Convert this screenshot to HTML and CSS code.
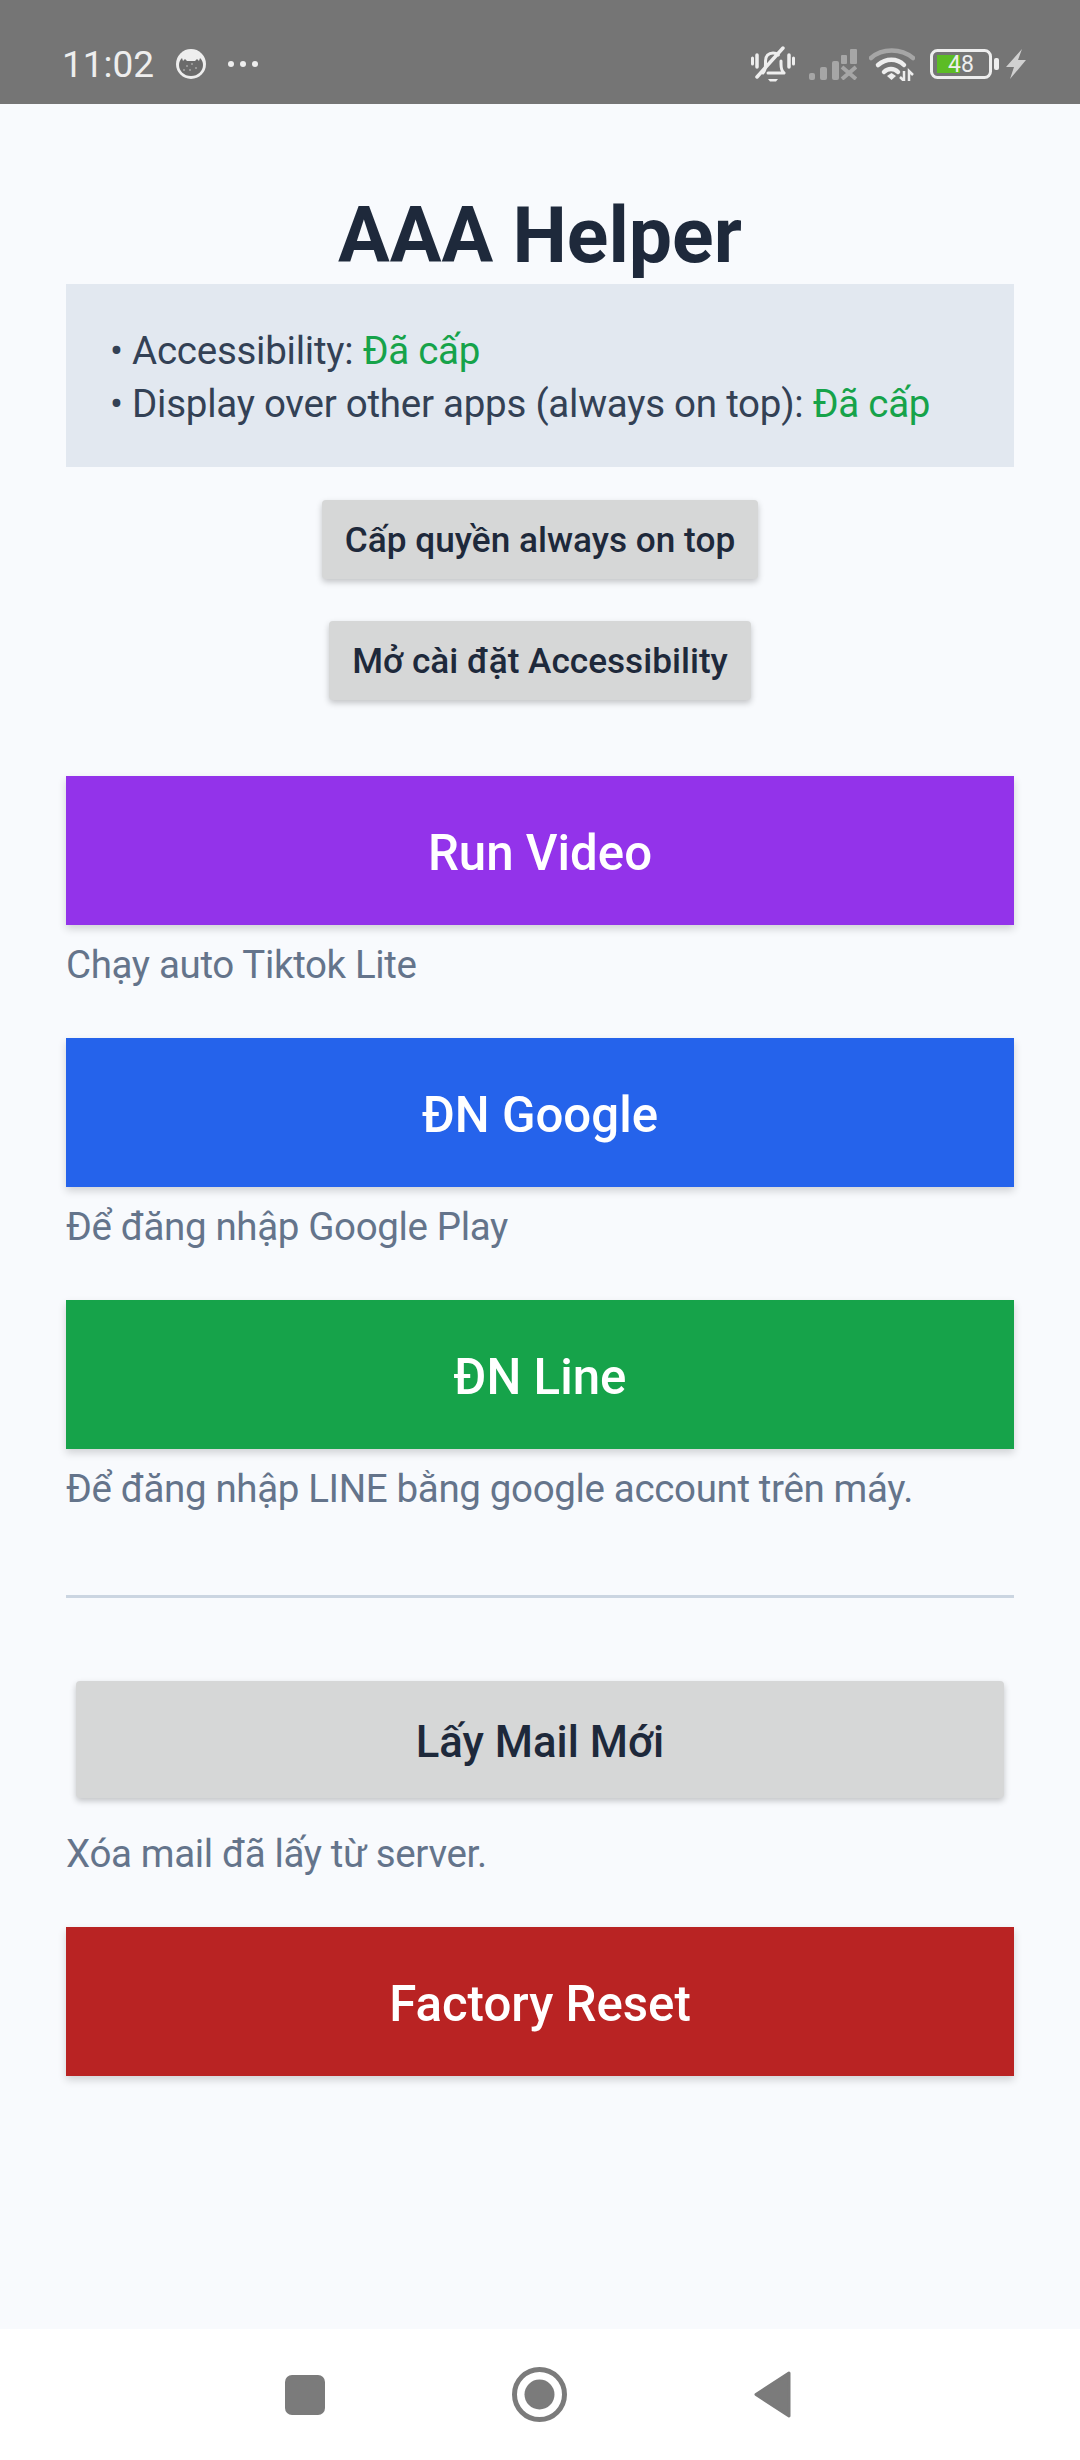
FILE: index.html
```html
<!DOCTYPE html>
<html lang="vi">
<head>
    <meta charset="UTF-8">
    <meta name="viewport" content="width=device-width, initial-scale=1.0">
    <title>AAA Helper</title>
    <link rel="stylesheet" href="styles.css">
</head>
<body>
    <div class="screen">
        <div class="status-bar">
            <div class="status-left">
                <span class="clock">11:02</span>
                <svg class="avatar" width="30" height="30" viewBox="0 0 30 30">
                    <circle cx="15" cy="15" r="15" fill="#eeeeee"/>
                    <path d="M3 16c0-3 1-5 3-7l1 3 2-2 2 2 8 0 2-2 2 2 1-3c2 2 3 4 3 7 0 6-5 11-12 11S3 22 3 16z" fill="#6b6b6b"/>
                    <circle cx="11" cy="17" r="0.800" fill="#cccccc"/>
                    <circle cx="16" cy="15" r="0.800" fill="#cccccc"/>
                    <circle cx="20" cy="19" r="0.800" fill="#cccccc"/>
                    <circle cx="14" cy="21" r="0.800" fill="#cccccc"/>
                    <circle cx="8" cy="21" r="0.800" fill="#cccccc"/>
                </svg>
                <svg class="dots" width="32" height="8" viewBox="0 0 32 8">
                    <circle cx="4" cy="4" r="3" fill="#eeeeee"/>
                    <circle cx="16" cy="4" r="3" fill="#eeeeee"/>
                    <circle cx="28" cy="4" r="3" fill="#eeeeee"/>
                </svg>
            </div>
            <div class="status-right">
                <svg class="icon-bell" width="44" height="36" viewBox="0 0 44 36" fill="none" stroke="#eeeeee" stroke-width="3" stroke-linecap="round" stroke-linejoin="round">
                    <path d="M1.500 12v6M42.500 12v6"/>
                    <path d="M6 9v12M38 9v12" stroke-width="3.500"/>
                    <path d="M12 27c2-2 2.500-4 2.500-9v-3c0-5 3-8 7.500-8 2 0 4 .7 5.300 2M30 15v3c0 5 .5 7 3 9H17"/>
                    <path d="M32 2 6 31" stroke-width="3.500"/>
                    <path d="M17 33h10l-2 2.500h-6z" fill="#eeeeee" stroke="none"/>
                </svg>
                <svg class="icon-signal" width="48" height="31" viewBox="0 0 48 31" fill="#a6a6a6">
                    <rect x="0" y="24" width="6" height="7" rx="2"/>
                    <rect x="11" y="18" width="7" height="13" rx="2"/>
                    <rect x="23" y="12" width="7" height="19" rx="2"/>
                    <rect x="32" y="6" width="6" height="9" rx="1"/>
                    <rect x="41" y="0" width="7" height="15" rx="1"/>
                    <path d="M33 18l14 12M47 18 33 30" stroke="#a6a6a6" stroke-width="4" fill="none"/>
                </svg>
                <svg class="icon-wifi" width="46" height="34" viewBox="0 0 46 34" fill="none">
                    <path d="M2 11C13 1 32 1 44 11" stroke="#a6a6a6" stroke-width="4.500" stroke-linecap="round"/>
                    <path d="M9 18c8-7 19-7 26 0" stroke="#eeeeee" stroke-width="4.500" stroke-linecap="round"/>
                    <path d="M15 25c4-4 10-4 14 0" stroke="#eeeeee" stroke-width="4.500" stroke-linecap="round"/>
                    <path d="M18 29l4.500-3 4.500 3-4.500 4z" fill="#eeeeee"/>
                    <path d="M35 24v10l-4-4M40 34V24l4 4" stroke="#eeeeee" stroke-width="2.500"/>
                </svg>
                <svg class="icon-battery" width="70" height="30" viewBox="0 0 70 30">
                    <rect x="1.500" y="1.500" width="59" height="27" rx="6" fill="none" stroke="#eeeeee" stroke-width="3"/>
                    <rect x="7" y="6" width="23" height="18" fill="#5cbc25"/>
                    <rect x="64" y="9" width="5" height="12" rx="2" fill="#eeeeee"/>
                    <text x="18" y="23" class="battery-num">48</text>
                </svg>
                <svg class="icon-bolt" width="20" height="30" viewBox="0 0 20 30">
                    <path d="M16 0 0 18h8L4 30l16-19h-8z" fill="#d0d0d0"/>
                </svg>
            </div>
        </div>

        <div class="content">
            <h1>AAA Helper</h1>

            <div class="perm-box">
                <div>• Accessibility: <span class="granted">Đã cấp</span></div>
                <div>• Display over other apps (always on top): <span class="granted">Đã cấp</span></div>
            </div>

            <button class="btn-small btn-first">Cấp quyền always on top</button>
            <button class="btn-small btn-second">Mở cài đặt Accessibility</button>

            <button class="btn-big purple">Run Video</button>
            <p class="hint">Chạy auto Tiktok Lite</p>

            <button class="btn-big blue">ĐN Google</button>
            <p class="hint">Để đăng nhập Google Play</p>

            <button class="btn-big green">ĐN Line</button>
            <p class="hint">Để đăng nhập LINE bằng google account trên máy.</p>

            <hr>

            <button class="btn-mail">Lấy Mail Mới</button>
            <p class="hint hint-mail">Xóa mail đã lấy từ server.</p>

            <button class="btn-big red">Factory Reset</button>
        </div>

        <div class="nav-bar">
            <svg width="40" height="40" viewBox="0 0 40 40">
                <rect width="40" height="40" rx="7" fill="#7b7b7b"/>
            </svg>
            <svg width="55" height="55" viewBox="0 0 55 55">
                <circle cx="27.500" cy="27.500" r="25" fill="none" stroke="#7b7b7b" stroke-width="5"/>
                <circle cx="27.500" cy="27.500" r="15" fill="#7b7b7b"/>
            </svg>
            <svg width="37" height="47" viewBox="0 0 37 47">
                <path d="M35 2 2 23.500 35 45z" fill="#7b7b7b" stroke="#7b7b7b" stroke-width="3" stroke-linejoin="round"/>
            </svg>
        </div>
    </div>
</body>
</html>
```

FILE: styles.css
```css
* {
    box-sizing: border-box;
}
body {
    margin: 0;
    font-family: Roboto, "Noto Sans", sans-serif;
    background-color: #f8fafd;
}
.screen {
    width: 1080px;
    height: 2460px;
    display: flex;
    flex-direction: column;
}

/* status bar */
.status-bar {
    height: 104px;
    flex-shrink: 0;
    background-color: #757575;
    display: flex;
    justify-content: space-between;
    padding: 0 54px 0 62px;
    color: #eeeeee;
}
.status-left, .status-right {
    display: flex;
    align-items: center;
    padding-top: 24px;
}
.clock {
    font-size: 37px;
    width: 114px;
}
.dots {
    margin-left: 21px;
}
.icon-signal {
    margin-left: 14px;
}
.icon-wifi {
    margin-left: 12px;
}
.icon-battery {
    margin-left: 15px;
}
.icon-bolt {
    margin-left: 6px;
}
.battery-num {
    fill: #eeeeee;
    font-family: Roboto, sans-serif;
    font-size: 23px;
}

/* main */
.content {
    flex: 1;
    padding: 0 66px;
    display: flex;
    flex-direction: column;
    align-items: center;
}
h1 {
    margin: 86px 0 2px;
    font-size: 77px;
    line-height: 92px;
    font-weight: 700;
    color: #1e293b;
}
.perm-box {
    align-self: stretch;
    height: 183px;
    background-color: #e2e8f0;
    padding: 40px 44px 0;
    font-size: 38.500px;
    line-height: 53px;
    letter-spacing: -0.25px;
    color: #334155;
}
.granted {
    color: #16a34a;
}
.btn-small, .btn-mail {
    border: none;
    border-radius: 4px;
    background-color: #d6d7d7;
    color: #1e293b;
    font-family: Roboto, sans-serif;
    font-weight: 500;
    box-shadow: 0 3px 6px rgba(0, 0, 0, 0.22);
}
.btn-small {
    font-size: 35.200px;
    height: 79px;
    padding: 1px 23px 0;
}
.btn-first {
    margin-top: 33px;
}
.btn-second {
    margin-top: 42px;
}
.btn-mail {
    align-self: stretch;
    margin: 83px 10px 0;
    height: 117px;
    padding-top: 5px;
    font-size: 43.700px;
}
.btn-big {
    align-self: stretch;
    height: 149px;
    border: none;
    padding-top: 6px;
    color: white;
    font-family: Roboto, sans-serif;
    font-size: 49.200px;
    font-weight: 500;
    box-shadow: 0 4px 8px rgba(0, 0, 0, 0.16);
}
.purple {
    background-color: #9333ea;
    margin-top: 76px;
}
.blue {
    background-color: #2563eb;
}
.green {
    background-color: #16a34a;
}
.red {
    background-color: #b92323;
}
.hint {
    align-self: stretch;
    margin: 17px 0 50px;
    font-size: 38.500px;
    line-height: 46px;
    letter-spacing: -0.35px;
    color: #64748b;
}
.hint-mail {
    margin-top: 33px;
}
hr {
    align-self: stretch;
    width: 100%;
    margin: 33px 0 0;
    border: none;
    height: 3px;
    background-color: #cbd5e1;
}

/* bottom nav */
.nav-bar {
    height: 131px;
    flex-shrink: 0;
    background-color: white;
    display: flex;
    align-items: center;
    gap: 187px;
    padding-left: 285px;
}
```
